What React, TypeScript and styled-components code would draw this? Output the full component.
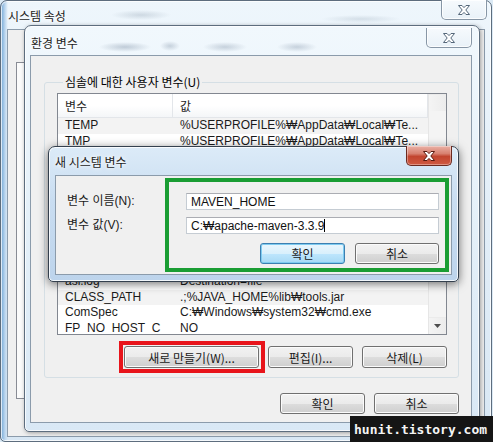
import styled, { createGlobalStyle, css } from 'styled-components'

const GlobalStyle = createGlobalStyle`
  html, body { margin: 0; padding: 0; background: #dceaf5; }
  body {
    font-family: "Liberation Sans", "Noto Sans CJK KR", sans-serif;
    font-size: 12px;
    color: #000;
  }
  * { box-sizing: border-box; }
`

const Desktop = styled.div`
  position: relative;
  width: 493px;
  height: 442px;
  overflow: hidden;
  background: #dceaf5;
`

// glass window frame, $active for the focused dialog
const Frame = styled.div<{ $active?: boolean }>`
  display: flex;
  flex-direction: column;
  border: 1px solid ${p => (p.$active ? '#34404e' : '#5d6d7e')};
  border-radius: 7px 7px 5px 5px;
  box-shadow: inset 0 0 0 1px rgba(255, 255, 255, 0.75);
  ${p =>
    p.$active
      ? css`
          background: linear-gradient(180deg, #dcebf8 0%, #c9ddf1 40%, #bdd4ec 100%);
          box-shadow: inset 0 0 0 1px rgba(255, 255, 255, 0.8), 0 2px 10px rgba(0, 0, 0, 0.55);
        `
      : css`
          background:
            radial-gradient(ellipse 30px 5px at 140px 14px, rgba(110, 130, 150, 0.25), transparent),
            radial-gradient(ellipse 40px 4px at 360px 18px, rgba(110, 130, 150, 0.2), transparent),
            linear-gradient(90deg, #6fa6d6 0px, #bcd6ee 4px, transparent 7px),
            linear-gradient(180deg, #eef6fc 0%, #e2eef8 50%, #d8e7f4 100%);
        `}
`

const OuterWindow = styled(Frame)`
  width: 492px;
  height: 442px;
`

const EnvWindow = styled(Frame)`
  position: absolute;
  left: 24px;
  top: 25px;
  width: 456px;
  height: 407px;
  background:
    radial-gradient(ellipse 26px 5px at 100px 21px, rgba(100, 120, 145, 0.35), transparent),
    radial-gradient(ellipse 10px 5px at 145px 20px, rgba(100, 120, 145, 0.3), transparent),
    radial-gradient(ellipse 22px 5px at 200px 21px, rgba(100, 120, 145, 0.3), transparent),
    radial-gradient(ellipse 20px 5px at 272px 21px, rgba(100, 120, 145, 0.3), transparent),
    linear-gradient(180deg, #f1f8fd 0%, #e4f0f9 50%, #d9e8f5 100%);
  box-shadow: inset 0 0 0 1px rgba(255, 255, 255, 0.75), 1px 1px 4px rgba(0, 0, 0, 0.35);
`

const NewVarDialog = styled(Frame)`
  position: absolute;
  left: 48px;
  top: 146px;
  width: 411px;
  height: 136px;
`

const TitleBar = styled.div<{ $height: number; $pad: number; $closeGap: number; $drop?: number }>`
  display: flex;
  justify-content: space-between;
  align-items: center;
  height: ${p => p.$height}px;
  padding-left: ${p => p.$pad}px;
  padding-right: ${p => p.$closeGap}px;
  padding-top: ${p => p.$drop ?? 0}px;
  flex-shrink: 0;
`

const Title = styled.span`
  font-family: "Noto Sans CJK KR", sans-serif;
  font-size: 12px;
  color: #1c1c1c;
  text-shadow: 0 0 6px #fff, 0 0 3px #fff;
  white-space: nowrap;
`

const CloseButton = styled.div<{ $active?: boolean }>`
  align-self: flex-start;
  margin-top: -1px;
  width: 46px;
  height: 20px;
  display: flex;
  align-items: center;
  justify-content: center;
  border: 1px solid ${p => (p.$active ? '#6b2a20' : '#8796a6')};
  border-top: none;
  border-radius: 0 0 5px 5px;
  background: ${p =>
    p.$active
      ? 'linear-gradient(180deg, #eab1a6 0%, #d88170 40%, #c2452f 55%, #cf5a42 100%)'
      : 'linear-gradient(180deg, #f6fafd 0%, #e9f1f8 100%)'};
  box-shadow: inset 0 0 0 1px rgba(255, 255, 255, ${p => (p.$active ? 0.35 : 0.8)});
`

const CloseGlyph = ({ active }: { active?: boolean }) => (
  <svg width="14" height="12" viewBox="0 0 14 12">
    <path
      d="M1.5 1.5H5L7 3.6L9 1.5H12.5L8.8 6L12.5 10.5H9L7 8.4L5 10.5H1.5L5.2 6Z"
      fill="#fff"
      stroke={active ? '#5a1a10' : '#55677a'}
      strokeWidth="1"
      strokeLinejoin="round"
    />
  </svg>
)

const Client = styled.div<{ $inset: string }>`
  flex: 1;
  margin: ${p => p.$inset};
  background: #f0f0f0;
  border: 1px solid #8b9bab;
  display: flex;
  flex-direction: column;
  min-height: 0;
`

const TabPage = styled.div`
  margin: 32px 8px 0 8px;
  height: 337px;
  border: 1px solid #898c95;
  background: #fbfbfb;
`

const EnvBody = styled.div`
  display: flex;
  flex-direction: column;
  padding: 18px 12px 8px 13px;
  height: 100%;
`

const GroupBox = styled.fieldset`
  margin: 0;
  padding: 3px 11px 8px 12px;
  border: 1px solid #d5dfe5;
  border-radius: 3px;
  height: 304px;
  display: flex;
  flex-direction: column;
`

const Legend = styled.legend`
  font-family: "Noto Sans CJK KR", sans-serif;
  font-size: 12px;
  line-height: 16px;
  padding: 0 2px;
  margin-left: 6px;
  color: #000;
`

const ListView = styled.div`
  display: grid;
  grid-template-columns: 1fr 18px;
  height: 242px;
  border: 1px solid #828790;
  background: #fff;
  overflow: hidden;
`

const ListMain = styled.div`
  display: flex;
  flex-direction: column;
  overflow: hidden;
`

const ListHeader = styled.div`
  display: grid;
  grid-template-columns: 115px 1fr;
  height: 24px;
  flex-shrink: 0;
  background: linear-gradient(180deg, #ffffff 0%, #ffffff 50%, #f4f6f8 100%);
  border-bottom: 1px solid #e3e6ea;
`

const HeaderCell = styled.div`
  display: flex;
  align-items: center;
  padding-left: 7px;
  font-family: "Noto Sans CJK KR", sans-serif;
  font-size: 12px;
  color: #1e1e1e;
  border-right: 1px solid #e3e6ea;
`

const Row = styled.div<{ $shaded?: boolean }>`
  display: grid;
  grid-template-columns: 115px 1fr;
  height: 15.6px;
  line-height: 15.6px;
  flex-shrink: 0;
  background: ${p => (p.$shaded ? '#f3f3f3' : '#fff')};
  color: #1a1a1a;
  white-space: nowrap;
`

const Cell = styled.span`
  padding-left: 7px;
  overflow: hidden;
`

const ScrollBar = styled.div`
  display: flex;
  flex-direction: column;
  justify-content: space-between;
  border-left: 1px solid #e6e6e6;
  background: #f4f4f4;
`

const ScrollArrow = styled.div`
  height: 17px;
  display: flex;
  align-items: center;
  justify-content: center;
  background: linear-gradient(90deg, #f4f4f4, #ececec);
  border-top: 1px solid #ebebeb;
`

const ButtonRow = styled.div<{ $top: number }>`
  display: flex;
  justify-content: flex-end;
  gap: 9px;
  margin-top: ${p => p.$top}px;
`

const Button = styled.div<{ $w: number; $h?: number; $default?: boolean }>`
  width: ${p => p.$w}px;
  height: ${p => p.$h ?? 21}px;
  display: flex;
  align-items: center;
  justify-content: center;
  font-family: "Noto Sans CJK KR", sans-serif;
  font-size: 12px;
  color: #1a1a1a;
  border-radius: 3px;
  border: 1px solid ${p => (p.$default ? '#3c7fb1' : '#707070')};
  background: ${p =>
    p.$default
      ? 'linear-gradient(180deg, #eaf6fd 0%, #d9f0fc 50%, #bee6fd 51%, #a7d9f5 100%)'
      : 'linear-gradient(180deg, #f2f2f2 0%, #ebebeb 50%, #dddddd 51%, #cfcfcf 100%)'};
  box-shadow: inset 0 0 0 1px ${p => (p.$default ? '#7ecbf0' : '#fbfbfb')};
  white-space: nowrap;
`

// square red annotation drawn round a button; negative margin keeps the row spacing
const RedMark = styled.div`
  display: flex;
  border: 4px solid #e8141b;
  padding: 1px 2px 1px 1px;
  margin: -5px -6px -5px -5px;
`

const DialogBody = styled.div`
  display: flex;
  height: 100%;
`

const LabelColumn = styled.div`
  width: 109px;
  padding: 17px 0 0 11px;
  display: flex;
  flex-direction: column;
  gap: 7px;
`

const FieldLabel = styled.div`
  height: 17px;
  line-height: 17px;
  white-space: nowrap;
  color: #1a1a1a;
`

const HighlightBox = styled.div`
  width: 284px;
  height: 94px;
  margin-top: 2px;
  border: 4px solid #1a9d33;
  padding: 11px 6px 0 17px;
  display: flex;
  flex-direction: column;
  gap: 7px;
`

const TextBox = styled.div`
  width: 253px;
  height: 17px;
  display: flex;
  align-items: center;
  padding-left: 4px;
  background: #fff;
  border: 1px solid #c5ccd3;
  border-top-color: #abadb3;
  color: #111;
  white-space: nowrap;
`

const Caret = styled.span`
  display: inline-block;
  width: 1px;
  height: 13px;
  background: #000;
`

const DialogButtons = styled.div`
  display: flex;
  justify-content: flex-end;
  gap: 10px;
  margin-top: 2px;
`

const Watermark = styled.div`
  position: absolute;
  right: 0;
  bottom: 0;
  width: 143px;
  height: 26px;
  padding-left: 4px;
  background: #151515;
  color: #f4f4f4;
  font-family: "DejaVu Sans Mono", monospace;
  font-weight: bold;
  font-size: 13px;
  line-height: 27px;
  white-space: nowrap;
`

const rows: { name: string; value: string; shaded?: boolean }[] = [
  { name: 'TEMP', value: '%USERPROFILE%₩AppData₩Local₩Te...', shaded: true },
  { name: 'TMP', value: '%USERPROFILE%₩AppData₩Local₩Te...' },
  ...Array.from({ length: 8 }, () => ({ name: '', value: '' })),
  { name: 'asl.log', value: 'Destination=file' },
  { name: 'CLASS_PATH', value: '.;%JAVA_HOME%lib₩tools.jar', shaded: true },
  { name: 'ComSpec', value: 'C:₩Windows₩system32₩cmd.exe' },
  { name: 'FP_NO_HOST_C', value: 'NO' },
]

export default function App() {
  return (
    <>
      <GlobalStyle />
      <Desktop>
        <OuterWindow>
          <TitleBar $height={28} $pad={7} $closeGap={4}>
            <Title>시스템 속성</Title>
            <CloseButton>
              <CloseGlyph />
            </CloseButton>
          </TitleBar>
          <Client $inset="0 6px 4px 6px">
            <TabPage />
          </Client>
        </OuterWindow>

        <EnvWindow>
          <TitleBar $height={29} $pad={6} $closeGap={7} $drop={3}>
            <Title>환경 변수</Title>
            <CloseButton>
              <CloseGlyph />
            </CloseButton>
          </TitleBar>
          <Client $inset="0 7px 8px 5px">
            <EnvBody>
              <GroupBox>
                <Legend>심솔에 대한 사용자 변수(U)</Legend>
                <ListView>
                  <ListMain>
                    <ListHeader>
                      <HeaderCell>변수</HeaderCell>
                      <HeaderCell>값</HeaderCell>
                    </ListHeader>
                    {rows.map((r, i) => (
                      <Row key={i} $shaded={r.shaded}>
                        <Cell>{r.name}</Cell>
                        <Cell>{r.value}</Cell>
                      </Row>
                    ))}
                  </ListMain>
                  <ScrollBar>
                    <ScrollArrow />
                    <ScrollArrow>
                      <svg width="7" height="4" viewBox="0 0 7 4">
                        <path d="M0 0H7L3.5 4Z" fill="#4d4d4d" />
                      </svg>
                    </ScrollArrow>
                  </ScrollBar>
                </ListView>
                <ButtonRow $top={11}>
                  <RedMark>
                    <Button $w={135} $h={22}>
                      새로 만들기(W)...
                    </Button>
                  </RedMark>
                  <Button $w={85} $h={22}>
                    편집(I)...
                  </Button>
                  <Button $w={85} $h={22}>
                    삭제(L)
                  </Button>
                </ButtonRow>
              </GroupBox>
              <ButtonRow $top={15}>
                <Button $w={85}>확인</Button>
                <Button $w={85}>취소</Button>
              </ButtonRow>
            </EnvBody>
          </Client>
        </EnvWindow>

        <NewVarDialog $active>
          <TitleBar $height={28} $pad={6} $closeGap={6}>
            <Title>새 시스템 변수</Title>
            <CloseButton $active>
              <CloseGlyph active />
            </CloseButton>
          </TitleBar>
          <Client $inset="0 6px 6px 6px">
            <DialogBody>
              <LabelColumn>
                <FieldLabel>변수 이름(N):</FieldLabel>
                <FieldLabel>변수 값(V):</FieldLabel>
              </LabelColumn>
              <HighlightBox>
                <TextBox>MAVEN_HOME</TextBox>
                <TextBox>
                  C:₩apache-maven-3.3.9
                  <Caret />
                </TextBox>
                <DialogButtons>
                  <Button $w={85} $default>
                    확인
                  </Button>
                  <Button $w={84}>취소</Button>
                </DialogButtons>
              </HighlightBox>
            </DialogBody>
          </Client>
        </NewVarDialog>

        <Watermark>hunit.tistory.com</Watermark>
      </Desktop>
    </>
  )
}
